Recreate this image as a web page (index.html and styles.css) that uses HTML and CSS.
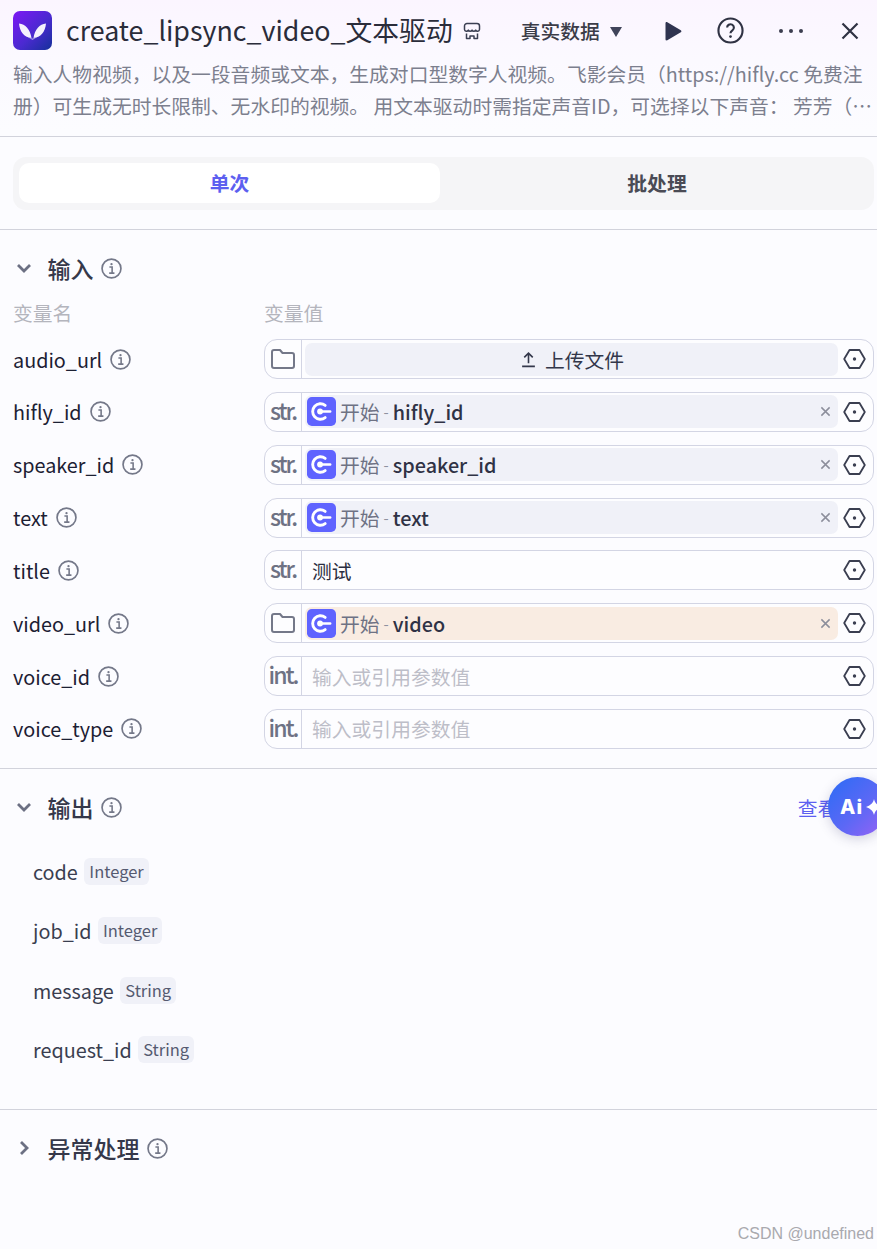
FILE: index.html
```html
<!DOCTYPE html>
<html lang="zh">
<head>
<meta charset="utf-8">
<title>create_lipsync_video</title>
<link rel="stylesheet" href="styles.css">
</head>
<body>
<svg class="defs" width="0" height="0" aria-hidden="true">
  <symbol id="i-info" viewBox="0 0 20 20"><circle cx="10" cy="10" r="9" fill="none" stroke="currentColor" stroke-width="1.6"/><circle cx="10" cy="5.900" r="1.100" fill="currentColor"/><path d="M8 8.600h2.600v5.600M7.800 14.400h5" fill="none" stroke="currentColor" stroke-width="1.500"/></symbol>
  <symbol id="i-hex" viewBox="0 0 23 20"><path d="M6.500 1h10l5.300 9-5.300 9h-10L1.200 10z" fill="none" stroke="currentColor" stroke-width="1.800" stroke-linejoin="round"/><circle cx="11.500" cy="10" r="1.700" fill="currentColor"/></symbol>
  <symbol id="i-folder" viewBox="0 0 24 20"><path d="M1 3a2 2 0 0 1 2-2h6l2.500 3H21a2 2 0 0 1 2 2v11a2 2 0 0 1-2 2H3a2 2 0 0 1-2-2z" fill="none" stroke="currentColor" stroke-width="2" stroke-linejoin="round"/></symbol>
  <symbol id="i-start" viewBox="0 0 30 30"><rect width="30" height="30" rx="5" fill="#5f63ff"/><path d="M18.800 8.700a8 8 0 1 0 0 12.600" fill="none" stroke="#fff" stroke-width="3" stroke-linecap="round"/><circle cx="13.500" cy="15" r="3" fill="#fff"/><path d="M14 15h10" stroke="#fff" stroke-width="2.500" stroke-linecap="round"/></symbol>
  <symbol id="i-x" viewBox="0 0 12 12"><path d="M1.500 1.500l9 9M10.500 1.500l-9 9" stroke="currentColor" stroke-width="1.600"/></symbol>
  <symbol id="i-down" viewBox="0 0 16 10"><path d="M2 2l6 6 6-6" fill="none" stroke="currentColor" stroke-width="2.800"/></symbol>
  <symbol id="i-right" viewBox="0 0 10 16"><path d="M2 2l6 6-6 6" fill="none" stroke="currentColor" stroke-width="2.800"/></symbol>
</svg>

<main class="panel">
  <header class="head">
    <div class="title-row">
      <svg class="logo" viewBox="0 0 39 39" aria-hidden="true">
        <defs><linearGradient id="lg" x1="0" y1="0" x2="1" y2="1"><stop offset="0" stop-color="#7d17f5"/><stop offset=".55" stop-color="#4a2ad0"/><stop offset="1" stop-color="#14309a"/></linearGradient></defs>
        <rect width="39" height="39" rx="7" fill="url(#lg)"/>
        <path d="M6 12.500c6.500.8 11 5.500 12.500 14.500-7-.5-11.800-6-12.500-14.500zM33 12.500c-6.500.8-11 5.500-12.500 14.500 7-.5 11.800-6 12.500-14.500z" fill="#fff" opacity=".94"/>
        <path d="M14 25.500l5.500 3.500 5.500-3.500-5.500 2z" fill="#fff" opacity=".5"/>
      </svg>
      <h1 class="title">create_lipsync_video_文本驱动</h1>
      <svg class="store" viewBox="0 0 18 18" aria-hidden="true"><path d="M4 1.500h10A2.500 2.500 0 0 1 16.500 4v3.500a2 2 0 0 1-3.800.6 2 2 0 0 1-3.700 0 2 2 0 0 1-3.700 0 2 2 0 0 1-3.800-.6V4A2.500 2.500 0 0 1 4 1.500zM3.500 11.500v5H7V14h4v2.500h3.500v-5" fill="none" stroke="currentColor" stroke-width="1.500" stroke-linejoin="round"/></svg>
      <div class="mode">真实数据<span class="caret"></span></div>
      <svg class="play" viewBox="0 0 18 20" aria-hidden="true"><path d="M1.500 2.200c0-1 1-1.500 1.800-1l13.500 8c.8.500.8 1.600 0 2.100l-13.500 8c-.8.500-1.800 0-1.800-1z" fill="currentColor"/></svg>
      <svg class="help" viewBox="0 0 28 28" aria-hidden="true"><circle cx="14" cy="14" r="12.500" fill="none" stroke="currentColor" stroke-width="2.200"/><path d="M10.500 11a3.500 3.500 0 1 1 5.500 2.900c-1.200.8-2 1.400-2 2.900" fill="none" stroke="currentColor" stroke-width="2.200"/><circle cx="14" cy="20.300" r="1.400" fill="currentColor"/></svg>
      <svg class="more" viewBox="0 0 26 6" aria-hidden="true"><circle cx="3" cy="3" r="2" fill="currentColor"/><circle cx="13" cy="3" r="2" fill="currentColor"/><circle cx="23" cy="3" r="2" fill="currentColor"/></svg>
      <svg class="close" viewBox="0 0 18 18" aria-hidden="true"><path d="M1.500 1.500l15 15M16.500 1.500l-15 15" stroke="currentColor" stroke-width="2.200"/></svg>
    </div>
    <p class="desc">输入人物视频，以及一段音频或文本，生成对口型数字人视频。飞影会员（https://hifly.cc 免费注册）可生成无时长限制、无水印的视频。 用文本驱动时需指定声音ID，可选择以下声音： 芳芳（…</p>
  </header>

  <div class="tabs-wrap">
    <div class="tabs">
      <div class="tab is-active">单次</div>
      <div class="tab">批处理</div>
    </div>
  </div>

  <section class="sec sec-input">
    <div class="sec-head">
      <svg class="chev-down"><use href="#i-down"/></svg>
      <h2 class="sec-title">输入</h2>
      <svg class="info"><use href="#i-info"/></svg>
    </div>
    <div class="cols"><span>变量名</span><span>变量值</span></div>
    <div class="rows">
      <div class="row">
        <div class="name">audio_url<svg class="info"><use href="#i-info"/></svg></div>
        <div class="field">
          <div class="type"><svg class="folder"><use href="#i-folder"/></svg></div>
          <div class="val"><div class="chip chip-upload"><svg class="up" viewBox="0 0 16 16"><path d="M8 11.500V2M4 6l4-4 4 4M2 14.500h12" fill="none" stroke="currentColor" stroke-width="1.500"/></svg>上传文件</div></div>
          <svg class="hex"><use href="#i-hex"/></svg>
        </div>
      </div>
      <div class="row">
        <div class="name">hifly_id<svg class="info"><use href="#i-info"/></svg></div>
        <div class="field">
          <div class="type">str.</div>
          <div class="val"><div class="chip"><svg class="start"><use href="#i-start"/></svg><span class="src">开始</span><span class="dash">-</span><span class="ref">hifly_id</span><svg class="x"><use href="#i-x"/></svg></div></div>
          <svg class="hex"><use href="#i-hex"/></svg>
        </div>
      </div>
      <div class="row">
        <div class="name">speaker_id<svg class="info"><use href="#i-info"/></svg></div>
        <div class="field">
          <div class="type">str.</div>
          <div class="val"><div class="chip"><svg class="start"><use href="#i-start"/></svg><span class="src">开始</span><span class="dash">-</span><span class="ref">speaker_id</span><svg class="x"><use href="#i-x"/></svg></div></div>
          <svg class="hex"><use href="#i-hex"/></svg>
        </div>
      </div>
      <div class="row">
        <div class="name">text<svg class="info"><use href="#i-info"/></svg></div>
        <div class="field">
          <div class="type">str.</div>
          <div class="val"><div class="chip"><svg class="start"><use href="#i-start"/></svg><span class="src">开始</span><span class="dash">-</span><span class="ref">text</span><svg class="x"><use href="#i-x"/></svg></div></div>
          <svg class="hex"><use href="#i-hex"/></svg>
        </div>
      </div>
      <div class="row">
        <div class="name">title<svg class="info"><use href="#i-info"/></svg></div>
        <div class="field">
          <div class="type">str.</div>
          <div class="val"><div class="plain">测试</div></div>
          <svg class="hex"><use href="#i-hex"/></svg>
        </div>
      </div>
      <div class="row">
        <div class="name">video_url<svg class="info"><use href="#i-info"/></svg></div>
        <div class="field">
          <div class="type"><svg class="folder"><use href="#i-folder"/></svg></div>
          <div class="val"><div class="chip chip-warn"><svg class="start"><use href="#i-start"/></svg><span class="src">开始</span><span class="dash">-</span><span class="ref">video</span><svg class="x"><use href="#i-x"/></svg></div></div>
          <svg class="hex"><use href="#i-hex"/></svg>
        </div>
      </div>
      <div class="row">
        <div class="name">voice_id<svg class="info"><use href="#i-info"/></svg></div>
        <div class="field">
          <div class="type">int.</div>
          <div class="val"><div class="plain placeholder">输入或引用参数值</div></div>
          <svg class="hex"><use href="#i-hex"/></svg>
        </div>
      </div>
      <div class="row">
        <div class="name">voice_type<svg class="info"><use href="#i-info"/></svg></div>
        <div class="field">
          <div class="type">int.</div>
          <div class="val"><div class="plain placeholder">输入或引用参数值</div></div>
          <svg class="hex"><use href="#i-hex"/></svg>
        </div>
      </div>
    </div>
  </section>

  <section class="sec sec-output">
    <div class="sec-head">
      <svg class="chev-down"><use href="#i-down"/></svg>
      <h2 class="sec-title">输出</h2>
      <svg class="info"><use href="#i-info"/></svg>
      <a class="link">查看示例</a>
    </div>
    <ul class="outs">
      <li class="out">code<span class="tag">Integer</span></li>
      <li class="out">job_id<span class="tag">Integer</span></li>
      <li class="out">message<span class="tag">String</span></li>
      <li class="out">request_id<span class="tag">String</span></li>
    </ul>
  </section>

  <section class="sec sec-error">
    <div class="sec-head">
      <svg class="chev-right"><use href="#i-right"/></svg>
      <h2 class="sec-title">异常处理</h2>
      <svg class="info"><use href="#i-info"/></svg>
    </div>
  </section>
</main>

<div class="ai-btn"><span class="ai-text">Ai</span><svg class="spark" viewBox="0 0 14 14"><path d="M7 0c.9 3.600 2.400 5.100 7 7-4.600 1.900-6.100 3.400-7 7-.9-3.600-2.400-5.100-7-7 4.600-1.900 6.100-3.400 7-7z" fill="#fff"/></svg></div>
<div class="mark">CSDN @undefined</div>
</body>
</html>
```

FILE: styles.css
```css
* { box-sizing: border-box; }
html, body { margin: 0; padding: 0; height: 1249px; overflow: hidden; }
body {
  position: relative;
  width: 877px;
  background: #fcfcff;
  color: #1c2033;
  font-family: "Noto Sans CJK SC", "Noto Sans", sans-serif;
  font-size: 19.8px;
}
.defs { position: absolute; }
.panel { display: flex; flex-direction: column; }

/* header */
.head {
  height: 137px;
  padding: 11px 0 0 13px;
  border-bottom: 1px solid #d2d3dc;
  background: linear-gradient(180deg, #fbf5ff 0, #fbf9ff 60px, #fcfcff 130px);
}
.title-row { display: flex; align-items: center; height: 39px; }
.logo { width: 39px; height: 39px; flex: none; }
.title { margin: 0 0 0 14px; padding-bottom: 2px; font-size: 26.8px; font-weight: 400; line-height: 37px; color: #2a2c3a; white-space: nowrap; }
.store { width: 18px; height: 18px; margin-left: 10px; color: #3a3f52; flex: none; }
.mode { margin-left: 40px; display: flex; align-items: center; font-weight: 500; color: #3b3c48; white-space: nowrap; }
.caret { width: 0; height: 0; margin-left: 10px; margin-top: 3px; border-left: 6.500px solid transparent; border-right: 6.500px solid transparent; border-top: 10px solid #40445a; }
.play { width: 18px; height: 20px; margin-left: 42px; color: #2f3450; flex: none; }
.help { width: 27px; height: 27px; margin-left: 35px; color: #2f3243; flex: none; }
.more { width: 26px; height: 6px; margin-left: 34px; color: #3b3e50; flex: none; }
.close { width: 18px; height: 18px; margin-left: 37px; color: #2f3243; flex: none; }
.desc {
  margin: 8px 0 0 0;
  color: #7c7f8e;
  font-size: 19.8px;
  line-height: 32px;
  height: 64px;
  overflow: hidden;
}

/* tabs */
.tabs-wrap { padding: 20px 3px 19px 13px; border-bottom: 1px solid #d2d3dc; height: 93px; }
.tabs { display: flex; height: 53px; padding: 6px; background: #f5f5f7; border-radius: 13px; }
.tab { flex: 1; display: flex; align-items: center; justify-content: center; font-weight: 700; color: #4a4b55; border-radius: 10px; height: 40px; padding-bottom: 2px; font-size: 19.8px; }
.tab.is-active { background: #fff; color: #5d5ff0; flex: 0 0 421px; }
.tab:last-child { padding-left: 6px; }

/* sections */
.sec { border-bottom: 1px solid #d2d3dc; padding: 0 3px 0 13px; }
.sec-input { height: 539px; padding-top: 18px; }
.sec-output { height: 341px; padding-top: 18px; padding-right: 0; }
.sec-error { border-bottom: 0; padding-top: 18px; }
.sec-head { display: flex; align-items: center; height: 40px; }
.chev-down { width: 16px; height: 10px; margin: 0 3px 0 3px; color: #6c7083; flex: none; }
.chev-right { width: 10px; height: 16px; margin: 0 6px; color: #6c7083; flex: none; }
.sec-title { margin: 0 0 0 12.500px; font-size: 23px; font-weight: 500; line-height: 40px; color: #35384a; }
.info { width: 21px; height: 21px; margin-left: 7.500px; color: #747889; flex: none; }
.link { margin-left: auto; color: #5d5ff0; white-space: nowrap; }

.cols { display: grid; grid-template-columns: 251px 1fr; height: 30px; margin: 10px 0 11px; color: #b4b5bd; line-height: 30px; }
.rows { display: flex; flex-direction: column; gap: 12.850px; }
.row { display: grid; grid-template-columns: 251px 1fr; align-items: center; height: 40px; }
.name { display: flex; align-items: center; color: #1c2033; }
.name .info { margin-left: 8px; }
.field { display: flex; align-items: center; height: 40px; border: 1px solid #d3d5e4; border-radius: 13px; background: #fdfdff; }
.type { width: 37px; height: 100%; flex: none; display: flex; align-items: center; justify-content: center; border-right: 1px solid #d3d5e4; color: #6e7284; font-size: 23px; font-weight: 500; letter-spacing: -2px; padding-bottom: 4px; }
.folder { width: 24px; height: 20px; margin: 4px 0 0 -1px; color: #747889; }
.val { flex: 1; min-width: 0; padding-left: 3px; }
.chip { display: flex; align-items: center; height: 33px; padding-left: 2px; padding-right: 7px; background: #f0f1f8; border-radius: 7px; }
.chip-warn { background: #f9ece2; }
.chip-upload { justify-content: center; color: #33374a; padding-left: 8px; }
.up { width: 17px; height: 17px; margin-right: 8px; color: #33374a; }
.start { width: 29px; height: 29px; flex: none; margin-right: 4px; }
.src { color: #6e7284; }
.dash { color: #8f92a0; margin: 0 4px; font-size: 15px; }
.ref { color: #2f3245; font-weight: 500; }
.x { width: 11px; height: 11px; margin-left: auto; color: #8c8e9b; flex: none; }
.plain { height: 33px; line-height: 33px; padding-left: 7px; color: #2a2d40; }
.placeholder { color: #bdbec8; }
.hex { width: 23px; height: 20px; margin: 0 7px 0 5px; color: #3a3e50; flex: none; }

/* outputs */
.outs { list-style: none; margin: 0; padding: 28px 0 0 20px; display: flex; flex-direction: column; gap: 26.300px; }
.out { display: flex; align-items: center; height: 33px; color: #3a3e50; }
.tag { margin-left: 6.500px; height: 27px; line-height: 27px; padding: 0 5px; border-radius: 6px; background: #f0f1f8; color: #555a70; font-size: 16.500px; }

/* floating */
.ai-btn {
  position: absolute; left: 828px; top: 777px; width: 59px; height: 59px; border-radius: 50%;
  background: linear-gradient(135deg, #2a6cf5 0, #5c68f5 55%, #9a62f5 100%);
  box-shadow: 0 3px 12px rgba(60, 60, 110, .22);
  display: flex; align-items: center; padding-left: 12px; color: #fff;
}
.ai-text { font-family: "Inter", sans-serif; font-weight: 800; font-size: 20px; letter-spacing: 1px; line-height: 1; }
.spark { width: 16px; height: 16px; margin-left: 3px; flex: none; }
.mark { position: absolute; right: 3px; bottom: 5px; color: #a9a9ae; font-family: "Liberation Sans", sans-serif; font-size: 16px; line-height: 20px; }
```
